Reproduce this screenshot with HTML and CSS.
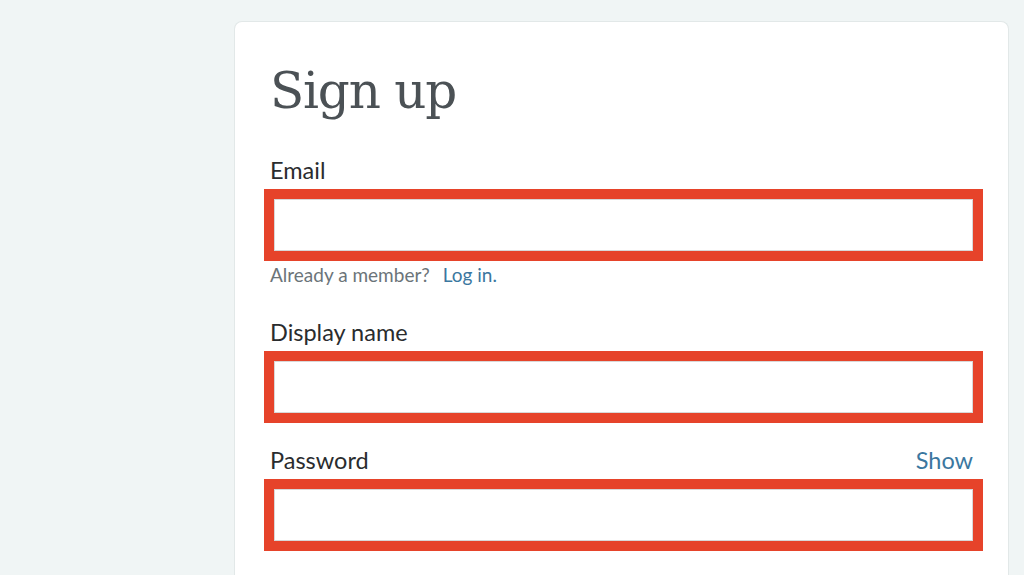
FILE: index.html
```html
<!DOCTYPE html>
<html lang="en">
<head>
<meta charset="UTF-8">
<meta name="viewport" content="width=device-width, initial-scale=1.0">
<title>Sign up</title>
<link rel="stylesheet" href="styles.css">
</head>
<body>
<div class="page">
    <div class="card">
        <h1>Sign up</h1>
        <form class="signup-form">
            <div class="field field-email">
                <label for="email">Email</label>
                <input type="email" id="email" name="email">
                <p class="helper">Already a member? <a href="#">Log in.</a></p>
            </div>
            <div class="field">
                <label for="displayName">Display name</label>
                <input type="text" id="displayName" name="displayName">
            </div>
            <div class="field">
                <div class="label-row">
                    <label for="password">Password</label>
                    <a href="#" class="show-link">Show</a>
                </div>
                <input type="password" id="password" name="password">
            </div>
        </form>
    </div>
</div>
</body>
</html>
```
FILE: styles.css
```css
body {
    margin: 0;
    padding: 0;
    background-color: #f0f5f5;
    font-family: Lato, "Open Sans", sans-serif;
    overflow: hidden;
}
.page {
    padding: 21px 15px 0 234px;
    height: 575px;
    box-sizing: border-box;
}
.card {
    background-color: #ffffff;
    border: 1px solid #e2e8e8;
    border-bottom: none;
    border-radius: 8px 8px 0 0;
    padding: 37px 35px 0 35px;
    height: 554px;
    box-sizing: border-box;
}
h1 {
    margin: 0 0 33px;
    font-family: "DejaVu Serif", serif;
    font-weight: normal;
    font-size: 50px;
    line-height: 64px;
    letter-spacing: -1.2px;
    color: #4b5155;
}
.field {
    margin-bottom: 23px;
}
.field-email {
    margin-bottom: 31px;
}
label {
    display: block;
    font-size: 23.5px;
    line-height: 28px;
    color: #2a2c2e;
    margin-bottom: 5px;
}
.label-row {
    display: flex;
    justify-content: space-between;
    align-items: flex-start;
    margin-bottom: 5px;
}
.label-row label {
    margin-bottom: 0;
}
.show-link {
    font-size: 23.5px;
    line-height: 28px;
    color: #3b77a0;
    text-decoration: none;
}
input {
    display: block;
    width: calc(100% + 16px);
    height: 72px;
    margin: 0 -10px 0 -6px;
    border: 10px solid #e6432a;
    box-shadow: inset 0 0 0 1px #d8d8d8;
    background-color: #fff;
    box-sizing: border-box;
    outline: none;
}
.helper {
    margin: 2px 0 0;
    font-size: 19px;
    line-height: 24px;
    color: #6b7479;
}
.helper a {
    margin-left: 8px;
    color: #3b77a0;
    text-decoration: none;
}
```
